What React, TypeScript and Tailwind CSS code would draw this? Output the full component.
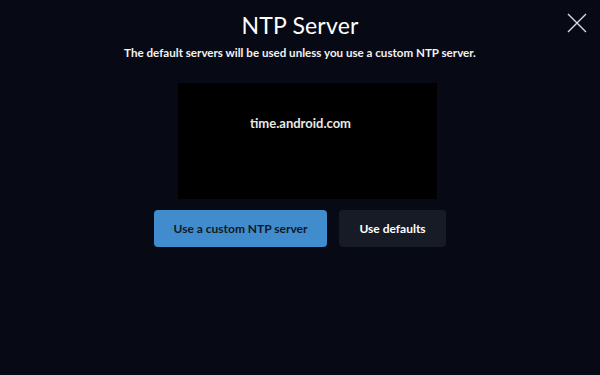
export default function App() {
  return (
    <div
      className="relative h-[375px] w-[600px] overflow-hidden bg-[#070a14] text-white"
      style={{ fontFamily: "Lato, 'Noto Sans', sans-serif" }}
    >
      {/* Close */}
      <button className="absolute right-[13px] top-[13px] text-[#d8dbe0]">
        <svg width="20" height="20" viewBox="0 0 20 20" fill="none" stroke="currentColor" strokeWidth="1.4">
          <path d="M1 1 L19 19 M19 1 L1 19" />
        </svg>
      </button>

      <div className="flex flex-col items-center pt-[10px]">
        <h1 className="text-[23px] leading-[30px] font-normal tracking-[0.2px]">NTP Server</h1>
        <p className="mt-[5px] text-[11.6px] leading-[16px] font-bold text-[#f1f2f4]">
          The default servers will be used unless you use a custom NTP server.
        </p>

        <div className="ml-[15px] mt-[22px] flex h-[116px] w-[259px] justify-center bg-black pr-[14px] pt-[32px]">
          <span className="text-[13px] leading-[16px] font-bold text-[#e8e8e8]">time.android.com</span>
        </div>

        <div className="mt-[11px] flex gap-[12px]">
          <button className="h-[37px] w-[173px] rounded-[4px] bg-[#418ccc] text-[12px] font-bold text-[#101826]">
            Use a custom NTP server
          </button>
          <button className="h-[37px] w-[107px] rounded-[4px] bg-[#161b25] text-[12px] font-bold text-white">
            Use defaults
          </button>
        </div>
      </div>
    </div>
  );
}
